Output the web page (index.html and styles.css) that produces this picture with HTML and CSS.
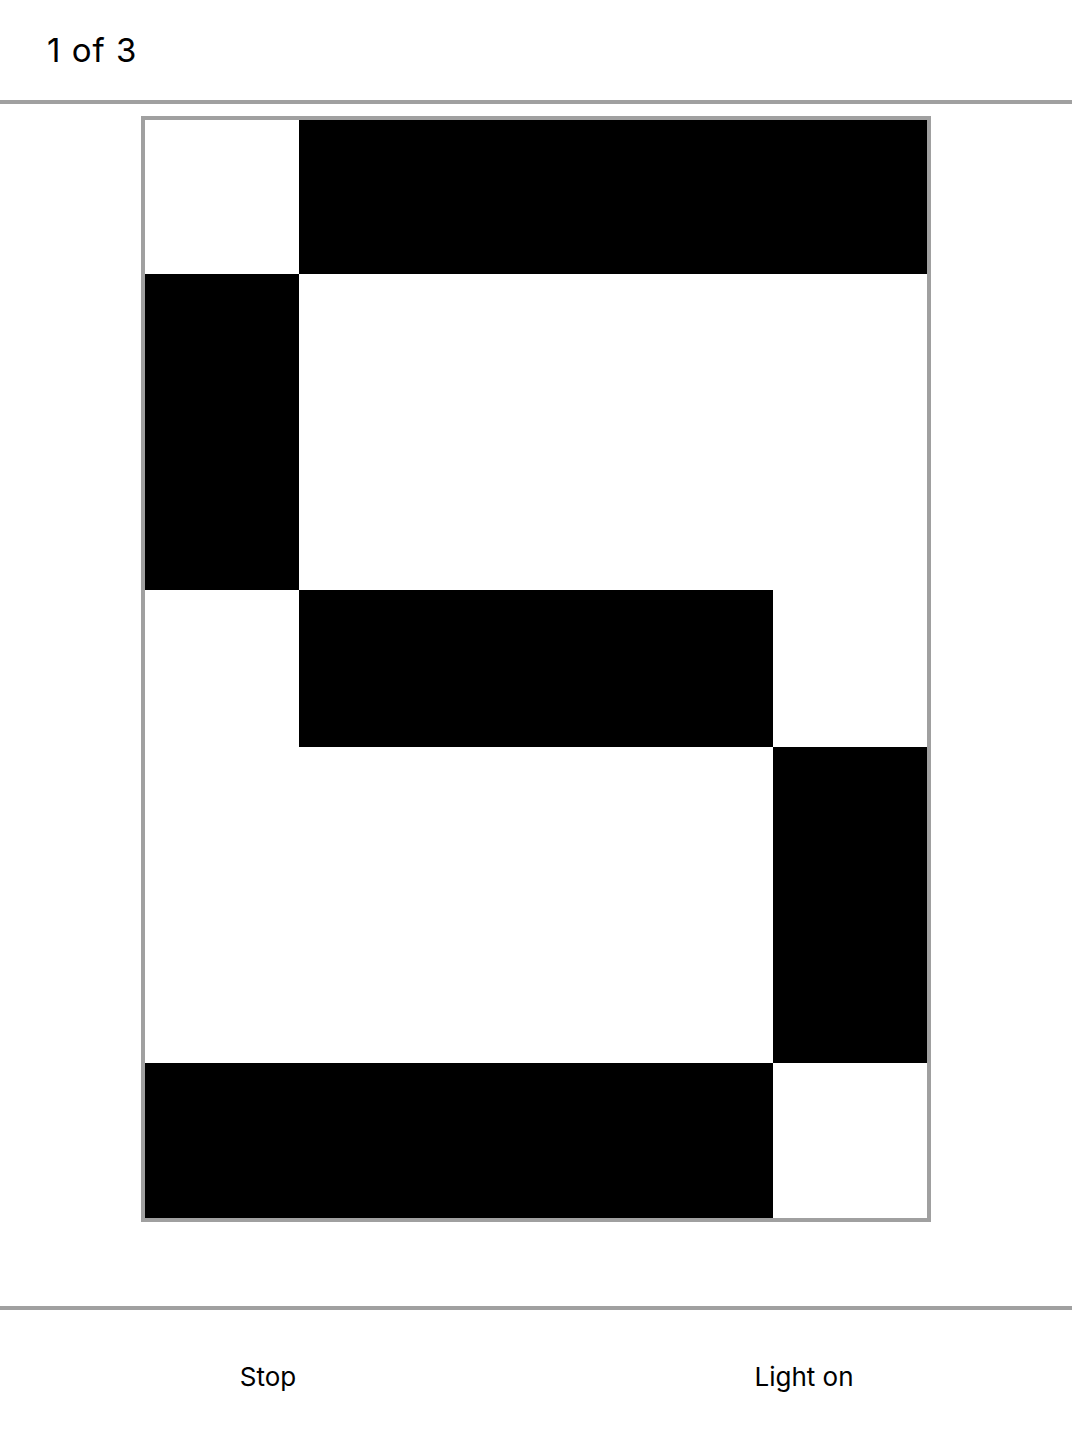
FILE: index.html
```html
<!DOCTYPE html>
<html lang="en">
<head>
    <meta charset="UTF-8">
    <meta name="viewport" content="width=device-width, initial-scale=1.0">
    <title>Digit Flash</title>
    <link rel="stylesheet" href="styles.css">
</head>
<body>
    <div class="topbar">
        <span id="counter">1 of 3</span>
    </div>

    <div class="stage">
        <div id="board" class="board"></div>
    </div>

    <div class="controls">
        <button class="ctrl" onclick="stopShow()">Stop</button>
        <button class="ctrl" id="lightButton" onclick="toggleLight()">Light on</button>
    </div>

    <script>
        // 5 x 7 pattern for the digit, one string per row
        const digit = [
            "01111",
            "10000",
            "10000",
            "01110",
            "00001",
            "00001",
            "11110"
        ];

        function drawBoard() {
            const board = document.getElementById('board');
            board.innerHTML = '';
            digit.forEach(row => {
                for (const c of row) {
                    const cell = document.createElement('div');
                    cell.className = c === '1' ? 'cell on' : 'cell';
                    board.appendChild(cell);
                }
            });
        }

        function stopShow() {
            // nothing running yet
        }

        function toggleLight() {
            const btn = document.getElementById('lightButton');
            btn.innerText = btn.innerText === 'Light on' ? 'Light off' : 'Light on';
        }

        drawBoard();
    </script>
</body>
</html>
```

FILE: styles.css
```css
html, body {
    margin: 0;
    padding: 0;
    height: 100%;
}

body {
    font-family: Inter, "Liberation Sans", Arial, sans-serif;
    background: #fff;
    color: #000;
    display: flex;
    flex-direction: column;
}

.topbar {
    height: 100px;
    border-bottom: 4px solid #a0a0a0;
    display: flex;
    align-items: center;
    padding-left: 47px;
    font-size: 33px;
    letter-spacing: 1px;
}

.stage {
    flex: 1;
    display: flex;
    justify-content: center;
    padding-top: 12px;
}

.board {
    border: 4px solid #a0a0a0;
    display: grid;
    grid-template-columns: 154px 158px 158px 158px 154px;
    grid-template-rows: 154px 158px 158px 157px 158px 158px 155px;
    height: fit-content;
}

.cell {
    background: #fff;
}

.cell.on {
    background: #000;
}

.controls {
    height: 138px;
    border-top: 4px solid #a0a0a0;
    display: flex;
}

.ctrl {
    flex: 1;
    background: none;
    border: none;
    font-family: inherit;
    font-size: 26px;
    color: #000;
    cursor: pointer;
    padding: 0 0 5px;
}
```
